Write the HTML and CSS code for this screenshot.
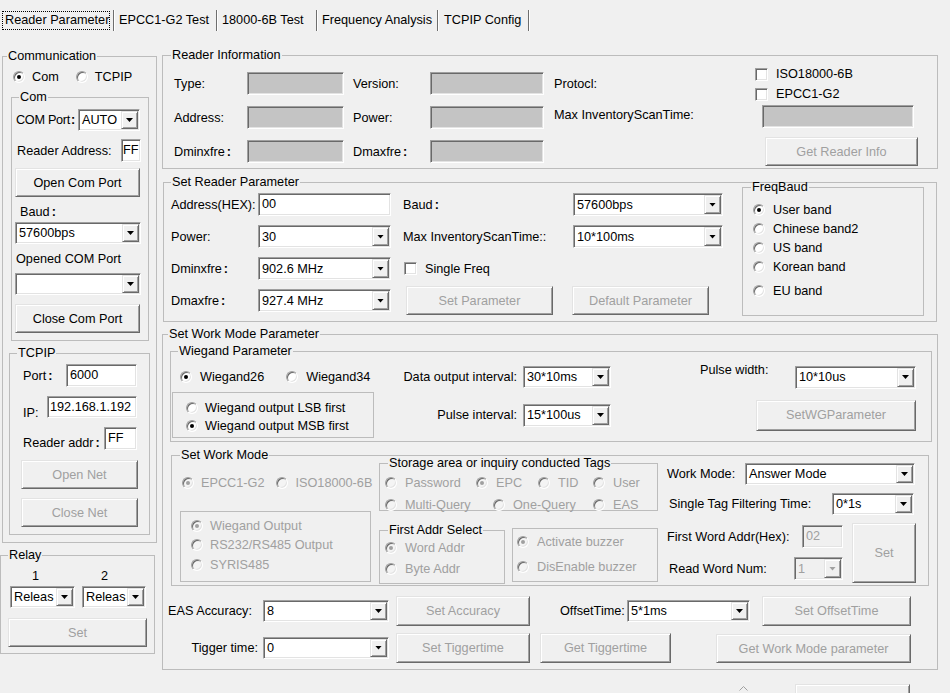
FILE: index.html
```html
<!DOCTYPE html>
<html lang="en">
<head>
<meta charset="utf-8">
<title>Reader Parameter</title>
<link rel="stylesheet" href="styles.css">
</head>
<body>
<div class="tabs">
  <div class="tab t1"><span class="focus">Reader Parameter</span></div>
  <div class="tab t2">EPCC1-G2 Test</div>
  <div class="tab t3">18000-6B Test</div>
  <div class="tab t4">Frequency Analysis</div>
  <div class="tab t5">TCPIP Config</div>
</div>

<div class="main">
  <div class="left">
    <fieldset class="gb comm">
      <legend class="lg-comm">Communication</legend>
      <div class="comm-radios">
        <span class="rb"><i class="radio on"></i>Com</span>
        <span class="rb rb-tcpip"><i class="radio"></i>TCPIP</span>
      </div>
      <fieldset class="gb com">
        <legend class="lg-com">Com</legend>
        <div class="com-port"><span class="tight">COM Port<span class="fc">:</span></span><div class="combo c-autc"><span class="ct">AUTO</span><b class="arr"></b></div></div>
        <div class="com-addr"><span>Reader Address:</span><div class="input i-ff">FF</div></div>
        <div class="btn b-opencom">Open Com Port</div>
        <div class="l-baud">Baud<span class="fc">:</span></div>
        <div class="combo c-baud"><span class="ct">57600bps</span><b class="arr"></b></div>
        <div class="l-opened">Opened COM Port</div>
        <div class="combo c-opened"><span class="ct"></span><b class="arr"></b></div>
        <div class="btn b-closecom">Close Com Port</div>
      </fieldset>
      <fieldset class="gb tcp">
        <legend class="lg-tcp">TCPIP</legend>
        <div class="tcp-row tr-port"><span>Port<span class="fc">:</span></span><div class="input i-port">6000</div></div>
        <div class="tcp-row tr-ip"><span class="low">IP:</span><div class="input i-ip">192.168.1.192</div></div>
        <div class="tcp-row tr-addr"><span>Reader addr<span class="fc">:</span></span><div class="input i-raddr">FF</div></div>
        <div class="btn dis b-net b-open">Open Net</div>
        <div class="btn dis b-net b-close">Close Net</div>
      </fieldset>
    </fieldset>
    <fieldset class="gb relay">
      <legend class="lg-relay">Relay</legend>
      <div class="relay-nums"><span>1</span><span>2</span></div>
      <div class="relay-combos">
        <div class="combo c-rel1"><span class="ct">Releas</span><b class="arr"></b></div>
        <div class="combo c-rel2"><span class="ct">Releas</span><b class="arr"></b></div>
      </div>
      <div class="btn dis b-relayset">Set</div>
    </fieldset>
  </div>

  <div class="right">
    <fieldset class="gb info">
      <legend class="lg-info">Reader Information</legend>
      <div class="info-body">
        <div class="info-grid">
          <span>Type:</span><div class="gray"></div><span class="pl9">Version:</span><div class="gray"></div><span class="pl10">Protocl:</span>
          <span>Address:</span><div class="gray"></div><span class="pl9">Power:</span><div class="gray"></div><span class="pl10 up">Max InventoryScanTime:</span>
          <span>Dminxfre<span class="fc">:</span></span><div class="gray"></div><span class="pl9">Dmaxfre<span class="fc">:</span></span><div class="gray"></div><span></span>
        </div>
        <div class="info-right">
          <span class="cbl"><i class="check"></i>ISO18000-6B</span>
          <span class="cbl cbl2"><i class="check"></i>EPCC1-G2</span>
          <div class="gray g-scan"></div>
          <div class="btn dis b-getinfo">Get Reader Info</div>
        </div>
      </div>
    </fieldset>

    <fieldset class="gb setp">
      <legend class="lg-setp">Set Reader Parameter</legend>
      <div class="setp-body">
        <div class="setp-grid">
          <span class="pl7">Address(HEX):</span><div class="input">00</div><span></span><span>Baud<span class="fc">:</span></span><div class="combo"><span class="ct">57600bps</span><b class="arr"></b></div>
          <span class="pl7">Power:</span><div class="combo"><span class="ct">30</span><b class="arr"></b></div><span></span><span>Max InventoryScanTime::</span><div class="combo"><span class="ct">10*100ms</span><b class="arr"></b></div>
          <span class="pl7">Dminxfre<span class="fc">:</span></span><div class="combo"><span class="ct">902.6 MHz</span><b class="arr"></b></div><span></span><span class="cbl sf"><i class="check"></i>Single Freq</span>
          <span class="pl7">Dmaxfre<span class="fc">:</span></span><div class="combo"><span class="ct">927.4 MHz</span><b class="arr"></b></div><span></span>
          <div class="setp-btns"><div class="btn dis b-setpar">Set Parameter</div><div class="btn dis b-defpar">Default Parameter</div></div>
        </div>
        <fieldset class="gb freq">
          <legend class="lg-freq">FreqBaud</legend>
          <span class="rb fr1"><i class="radio on"></i>User band</span>
          <span class="rb fr2"><i class="radio"></i>Chinese band2</span>
          <span class="rb fr3"><i class="radio"></i>US band</span>
          <span class="rb fr4"><i class="radio"></i>Korean band</span>
          <span class="rb fr5"><i class="radio"></i>EU band</span>
        </fieldset>
      </div>
    </fieldset>

    <fieldset class="gb wm">
      <legend class="lg-wm">Set Work Mode Parameter</legend>
      <fieldset class="gb wieg">
        <legend class="lg-wieg">Wiegand Parameter</legend>
        <div class="wieg-grid">
          <div class="wg-radios">
            <span class="rb"><i class="radio on"></i>Wiegand26</span>
            <span class="rb wg34"><i class="radio"></i>Wiegand34</span>
          </div>
          <span class="wg-dlabel">Data output interval:</span>
          <div class="combo wg-dcombo"><span class="ct">30*10ms</span><b class="arr"></b></div>
          <span class="wg-pwlabel">Pulse width:</span>
          <div class="combo wg-pwcombo"><span class="ct">10*10us</span><b class="arr"></b></div>
          <div class="box wg-box">
            <span class="rb wb1"><i class="radio"></i>Wiegand output LSB first</span>
            <span class="rb wb2"><i class="radio on"></i>Wiegand output MSB first</span>
          </div>
          <span class="wg-pilabel">Pulse interval:</span>
          <div class="combo wg-picombo"><span class="ct">15*100us</span><b class="arr"></b></div>
          <div class="btn dis wg-btn">SetWGParameter</div>
        </div>
      </fieldset>

      <fieldset class="gb swm">
        <legend class="lg-swm">Set Work Mode</legend>
        <div class="swm-grid">
          <div class="swm-proto dis">
            <span class="rb"><i class="radio on"></i>EPCC1-G2</span>
            <span class="rb"><i class="radio"></i>ISO18000-6B</span>
          </div>
          <fieldset class="gb store">
            <legend class="lg-store">Storage area or inquiry conducted Tags</legend>
            <div class="st-r st-r1 dis">
              <span class="rb w91"><i class="radio"></i>Password</span>
              <span class="rb w62"><i class="radio on"></i>EPC</span>
              <span class="rb w55"><i class="radio"></i>TID</span>
              <span class="rb"><i class="radio"></i>User</span>
            </div>
            <div class="st-r st-r2 dis">
              <span class="rb w108"><i class="radio"></i>Multi-Query</span>
              <span class="rb w100"><i class="radio"></i>One-Query</span>
              <span class="rb"><i class="radio"></i>EAS</span>
            </div>
          </fieldset>
          <div class="box outbox dis">
            <span class="rb ob1"><i class="radio on"></i>Wiegand Output</span>
            <span class="rb ob2"><i class="radio"></i>RS232/RS485 Output</span>
            <span class="rb ob3"><i class="radio"></i>SYRIS485</span>
          </div>
          <div class="swm-b2">
            <fieldset class="gb faddr">
              <legend class="lg-faddr">First Addr Select</legend>
              <div class="dis">
                <span class="rb fa1"><i class="radio on"></i>Word Addr</span>
                <span class="rb fa2"><i class="radio"></i>Byte Addr</span>
              </div>
            </fieldset>
            <div class="box buzz dis">
              <span class="rb bz1"><i class="radio on"></i>Activate buzzer</span>
              <span class="rb bz2"><i class="radio"></i>DisEnable buzzer</span>
            </div>
          </div>
          <div class="swm-right">
            <div class="wmr wmr1"><span class="lab">Work Mode:</span><div class="combo c-wmode"><span class="ct">Answer Mode</span><b class="arr"></b></div></div>
            <div class="wmr wmr2"><span class="lab">Single Tag Filtering Time:</span><div class="combo c-filter"><span class="ct">0*1s</span><b class="arr"></b></div></div>
            <div class="wmr3">
              <span class="wl1">First Word Addr(Hex):</span>
              <div class="input dis i-fw">02</div>
              <div class="btn dis b-set2">Set</div>
              <span class="wl2">Read Word Num:</span>
              <div class="combo dis c-rwn"><span class="ct">1</span><b class="arr"></b></div>
            </div>
          </div>
        </div>
      </fieldset>

      <div class="eas-row">
        <span class="eas-lab">EAS Accuracy:</span>
        <div class="combo c-eas"><span class="ct">8</span><b class="arr"></b></div>
        <div class="btn dis b-setacc">Set Accuracy</div>
        <span class="off-lab">OffsetTime:</span>
        <div class="combo c-off"><span class="ct">5*1ms</span><b class="arr"></b></div>
        <div class="btn dis b-setoff">Set OffsetTime</div>
      </div>
      <div class="tig-row">
        <span class="tig-lab">Tigger time:</span>
        <div class="combo c-eas"><span class="ct">0</span><b class="arr"></b></div>
        <div class="btn dis b-settig">Set Tiggertime</div>
        <div class="btn dis b-gettig">Get Tiggertime</div>
        <div class="btn dis b-getwm">Get Work Mode parameter</div>
      </div>
    </fieldset>

    <div class="log-row">
      <div class="log">
        <div class="sb"><svg width="9" height="5" viewBox="0 0 9 5"><path d="M0.5 4.5 L4.5 0.5 L8.5 4.5" fill="none" stroke="#a0a0a0"/></svg></div>
      </div>
      <div class="btn b-clear">Clear</div>
    </div>
  </div>
</div>
</body>
</html>
```
FILE: styles.css
```css
* { box-sizing: border-box; }
html, body { margin: 0; padding: 0; }
body {
  width: 950px; height: 693px; overflow: hidden;
  background: #f0f0f0; color: #000;
  font-family: "Liberation Sans", Arial, "Noto Sans CJK SC", sans-serif;
  font-size: 12.7px; line-height: 14px;
}
i, b { font-style: normal; font-weight: normal; }
.fc { font-weight: bold; margin-left: 2px; }
.tight { white-space: nowrap; letter-spacing: -0.3px; }
.tight .fc { margin-left: 1px; }

/* tabs */
.tabs { display: flex; height: 48px; padding-top: 10px; }
.tab {
  height: 21px; padding: 3px 0 0 5px; white-space: nowrap;
  border-right: 1px solid #6e6e6e; box-shadow: 1px 0 0 #fff;
}
.t1 { width: 114px; padding: 1px 0 0 2px; }
.focus { display: block; width: 108px; height: 19px; border: 1px dotted #000; padding: 1px 0 0 2px; }
.t2 { width: 103px; }
.t3 { width: 100px; }
.t4 { width: 121px; }
.t5 { width: 91px; padding-left: 6px; }

/* layout */
.main { display: grid; grid-template-columns: 160px 790px; align-items: start; }
.gb { margin: 0; padding: 0; min-width: 0; border: 1px solid #bcbcbc; }
.gb > legend { padding: 0 1px; height: 14px; line-height: 14px; white-space: nowrap; }
.box { border: 1px solid #bcbcbc; }

/* controls */
.input, .combo, .gray, .check {
  background: #fff; border: 1px solid;
  border-color: #a0a0a0 #fff #fff #a0a0a0;
  box-shadow: inset 1px 1px 0 #696969, inset -1px -1px 0 #e3e3e3;
}
.input { display: flex; align-items: center; padding: 0 0 1px 3px; white-space: nowrap; overflow: hidden; }
.gray { background: #c4c4c4; }
.input.dis, .combo.dis { background: #f0f0f0; color: #a0a0a0; }
.combo { display: flex; padding: 1px; }
.ct { flex: 1; min-width: 0; display: flex; align-items: center; padding-left: 2px; overflow: hidden; white-space: nowrap; }
.arr {
  flex: none; width: 17px; display: flex; align-items: center; justify-content: center;
  background: #f0f0f0; border: 1px solid; border-color: #e3e3e3 #696969 #696969 #e3e3e3;
  box-shadow: inset 1px 1px 0 #fff, inset -1px -1px 0 #a0a0a0;
}
.arr::after { content: ""; width: 7px; height: 4px; background: #000; clip-path: polygon(0 0, 100% 0, 50% 100%); }
.combo.dis .arr::after { background: #a0a0a0; }
.btn {
  display: flex; align-items: center; justify-content: center; white-space: nowrap;
  background: #f0f0f0; border: 1px solid; border-color: #e3e3e3 #696969 #696969 #e3e3e3;
  box-shadow: inset 1px 1px 0 #fff, inset -1px -1px 0 #a0a0a0;
}
.dis, .btn.dis { color: #a0a0a0; }
.rb, .cbl { display: flex; align-items: center; gap: 7px; height: 16px; white-space: nowrap; }
.radio {
  flex: none; width: 12px; height: 12px; border-radius: 50%; background: #fff;
  border: 1px solid; border-color: #a0a0a0 #fff #fff #a0a0a0;
  box-shadow: inset 1px 1px 0 #696969, inset -1px -1px 0 #e3e3e3;
  display: flex; align-items: center; justify-content: center;
}
.radio.on::after { content: ""; width: 4px; height: 4px; border-radius: 50%; background: #000; }
.dis .radio { background: #f4f4f4; }
.dis .radio.on::after { background: #a0a0a0; }
.check { flex: none; width: 13px; height: 13px; }

/* left column */
.left { padding-top: 1px; }
.comm { margin-left: 2px; width: 155px; height: 494px; }
.lg-comm { margin-left: 4px; }
.comm-radios { display: flex; margin: 6px 0 0 10px; height: 16px; align-items: center; }
.rb-tcpip { margin-left: 17px; }
.com { margin: 5px 0 0 8px; width: 138px; height: 251px; }
.lg-com { margin-left: 7px; }
.com-port { display: flex; align-items: center; justify-content: space-between; height: 22px; margin-top: 5px; padding: 0 8px 0 4px; }
.c-autc { width: 62px; height: 22px; flex: none; }
.com-addr { display: flex; align-items: center; justify-content: space-between; height: 23px; margin-top: 8px; padding: 0 7px 0 5px; }
.i-ff { width: 20px; height: 23px; padding-left: 1px; }
.b-opencom { margin: 6px 0 0 3px; width: 125px; height: 29px; }
.l-baud { margin-top: 8px; padding-left: 8px; }
.c-baud { margin: 3px 0 0 3px; width: 126px; height: 22px; }
.l-opened { margin-top: 8px; padding-left: 4px; }
.c-opened { margin: 7px 0 0 3px; width: 126px; height: 22px; }
.b-closecom { margin: 9px 0 0 3px; width: 125px; height: 29px; }

.tcp { margin: 5px 0 0 6px; width: 141px; height: 189px; }
.lg-tcp { margin-left: 7px; }
.tcp-row { display: flex; justify-content: space-between; padding: 0 12px 0 13px; white-space: nowrap; }
.tr-port { margin-top: 4px; height: 23px; align-items: center; }
.i-port { width: 71px; height: 23px; }
.tr-ip { margin-top: 9px; height: 22px; align-items: flex-end; }
.tr-ip .low { margin-bottom: -2px; }
.i-ip { width: 90px; height: 22px; padding-left: 2px; }
.tr-addr { margin-top: 9px; height: 23px; align-items: flex-end; }
.i-raddr { width: 33px; height: 23px; }
.b-net { margin-left: 11px; width: 117px; height: 29px; }
.b-open { margin-top: 10px; }
.b-close { margin-top: 9px; }

.relay { margin-top: 5px; width: 155px; height: 106px; }
.lg-relay { margin-left: 7px; }
.relay-nums { display: flex; margin-top: 7px; padding-left: 31px; height: 14px; }
.relay-nums span + span { margin-left: 62px; }
.relay-combos { display: flex; margin-top: 3px; padding-left: 9px; gap: 7px; }
.c-rel1 { width: 65px; height: 22px; }
.c-rel2 { width: 64px; height: 22px; }
.b-relayset { margin: 10px 0 0 7px; width: 139px; height: 29px; }

/* reader information */
.info { margin-left: 2px; width: 776px; height: 121px; }
.lg-info { margin-left: 8px; }
.info-body { display: flex; }
.info-grid {
  display: grid; grid-template-columns: 73px 97px 86px 114px 211px;
  grid-template-rows: 23px 23px 23px; row-gap: 11px; padding: 10px 0 0 11px; align-items: center;
}
.info-grid > span { white-space: nowrap; }
.info-grid .gray { height: 23px; }
.pl9 { padding-left: 9px; }
.pl10 { padding-left: 10px; }
.up { margin-top: -6px; }
.info-right { width: 182px; padding-top: 5px; display: flex; flex-direction: column; align-items: flex-start; }
.info-right .cbl { height: 14px; gap: 8px; }
.cbl2 { margin-top: 6px; }
.g-scan { margin: 4px 0 0 7px; width: 152px; height: 23px; }
.b-getinfo { margin: 9px 0 0 10px; width: 153px; height: 29px; }

/* set reader parameter */
.setp { margin: 6px 0 0 3px; width: 774px; height: 147px; }
.lg-setp { margin-left: 7px; }
.setp-body { display: flex; align-items: flex-start; }
.setp-grid {
  display: grid; grid-template-columns: 94px 133px 12px 170px 150px;
  grid-template-rows: repeat(4, 23px); row-gap: 9px; padding-top: 4px; align-items: center;
}
.setp-grid > span { white-space: nowrap; }
.setp-grid .input, .setp-grid .combo { height: 23px; }
.pl7 { padding-left: 7px; }
.sf { grid-column: 4 / 6; padding-left: 1px; gap: 8px; }
.setp-btns { grid-column: 4 / 6; display: flex; }
.b-setpar { margin-left: 3px; width: 147px; height: 29px; }
.b-defpar { margin-left: 19px; width: 137px; height: 29px; }
.freq { margin: -9px 0 0 19px; width: 182px; height: 136px; }
.lg-freq { margin-left: 8px; }
.freq .rb { gap: 8px; padding-left: 10px; }
.fr1 { margin-top: 8px; }
.fr2, .fr3, .fr4 { margin-top: 3px; }
.fr5 { margin-top: 8px; }

/* set work mode parameter */
.wm { margin: 5px 0 0 2px; width: 776px; height: 343px; }
.lg-wm { margin-left: 5px; }
.wieg { margin: 3px 0 0 7px; width: 762px; height: 98px; }
.lg-wieg { margin-left: 7px; }
.wieg-grid {
  display: grid; grid-template-columns: 209px 20px 120px 91px 89px 56px 39px 121px;
  grid-template-rows: 30px 46px; padding-top: 4px; align-items: center;
}
.wieg-grid > span { white-space: nowrap; }
.wg-radios { display: flex; padding-left: 9px; }
.wg-radios .rb { gap: 8px; }
.wg34 { margin-left: 22px; }
.wg-dlabel { grid-column: 3; text-align: right; padding-right: 3px; }
.wg-dcombo { grid-column: 4; margin-left: 3px; width: 88px; height: 22px; }
.wg-pwlabel { grid-column: 6 / 8; align-self: start; margin-top: 1px; }
.wg-pwcombo { grid-column: 8; height: 23px; }
.wg-box { grid-row: 2; grid-column: 1; margin-left: 1px; width: 202px; height: 46px; }
.wg-box .rb { padding-left: 13px; }
.wb1 { margin-top: 7px; }
.wb2 { margin-top: 2px; }
.wg-pilabel { grid-row: 2; grid-column: 2 / 4; text-align: right; padding-right: 3px; }
.wg-picombo { grid-row: 2; grid-column: 4; margin-left: 3px; width: 88px; height: 23px; }
.wg-btn { grid-row: 2; grid-column: 7 / 9; height: 31px; }

.swm { margin: 6px 0 0 8px; width: 758px; height: 138px; }
.lg-swm { margin-left: 8px; }
.swm-grid { display: grid; grid-template-columns: 207px 279px 270px; grid-template-rows: 55px 74px; margin-top: -6px; }
.swm-proto { grid-column: 1; grid-row: 1; display: flex; align-items: flex-start; padding: 19px 0 0 10px; }
.swm-proto .rb + .rb { margin-left: 12px; }
.store { grid-column: 2; grid-row: 1; width: 279px; height: 55px; }
.lg-store { margin-left: 8px; }
.st-r { display: flex; padding-left: 5px; }
.st-r .rb { gap: 8px; }
.st-r1 { margin-top: 5px; }
.st-r2 { margin-top: 6px; }
.w91 { width: 91px; } .w62 { width: 62px; } .w55 { width: 55px; }
.w108 { width: 108px; } .w100 { width: 100px; }
.outbox { grid-column: 1; grid-row: 2; margin-left: 8px; width: 191px; height: 71px; }
.outbox .rb { padding-left: 10px; }
.ob1 { margin-top: 6px; } .ob2 { margin-top: 3px; } .ob3 { margin-top: 4px; }
.swm-b2 { grid-column: 2; grid-row: 2; display: flex; align-items: flex-start; }
.faddr { margin-top: 12px; width: 126px; height: 61px; }
.lg-faddr { margin-left: 8px; }
.faddr .rb { padding-left: 5px; gap: 8px; }
.fa1 { margin-top: 3px; } .fa2 { margin-top: 5px; }
.buzz { margin: 17px 0 0 7px; width: 146px; height: 54px; }
.buzz .rb { padding-left: 4px; gap: 8px; }
.bz1 { margin-top: 5px; } .bz2 { margin-top: 9px; }
.swm-right { grid-column: 3; grid-row: 1 / 3; }
.wmr { display: flex; align-items: center; height: 22px; white-space: nowrap; }
.wmr1 { margin-top: 7px; }
.wmr1 .lab { width: 87px; padding-left: 9px; }
.c-wmode { width: 170px; height: 22px; }
.wmr2 { margin-top: 8px; }
.wmr2 .lab { width: 174px; padding-left: 11px; }
.c-filter { width: 82px; height: 22px; }
.wmr3 {
  margin-top: 8px; display: grid; grid-template-columns: 136px 58px 64px;
  grid-template-rows: 23px 23px; row-gap: 9px; padding-top: 2px; align-items: center;
}
.wmr3 > span { white-space: nowrap; }
.wl1 { padding-left: 9px; }
.wl2 { padding-left: 11px; }
.i-fw { margin-left: 8px; width: 41px; height: 23px; }
.c-rwn { width: 49px; height: 23px; }
.b-set2 { grid-column: 3; grid-row: 1 / 3; height: 60px; }

.eas-row { display: flex; align-items: center; height: 30px; margin-top: 10px; white-space: nowrap; }
.eas-lab { width: 100px; padding-left: 5px; }
.c-eas { width: 126px; height: 22px; }
.b-setacc { margin-left: 7px; width: 134px; height: 30px; }
.off-lab { margin-left: 30px; width: 67px; }
.c-off { width: 123px; height: 22px; }
.b-setoff { margin-left: 12px; width: 149px; height: 30px; }
.tig-row { display: flex; align-items: center; height: 31px; margin-top: 6px; white-space: nowrap; }
.tig-lab { width: 100px; text-align: right; padding-right: 5px; }
.b-settig { margin-left: 7px; width: 134px; height: 30px; }
.b-gettig { margin-left: 10px; width: 131px; height: 30px; }
.b-getwm { margin-left: 45px; width: 195px; height: 29px; align-self: flex-end; }

.log-row { display: flex; align-items: flex-start; margin-top: 8px; }
.log { margin-left: 3px; width: 591px; height: 40px; display: flex; justify-content: flex-end; padding: 2px; }
.sb { width: 17px; background: #f0f0f0; display: flex; justify-content: center; align-items: flex-start; padding-top: 6px; }
.b-clear { margin: 6px 0 0 41px; width: 115px; height: 29px; }
```
